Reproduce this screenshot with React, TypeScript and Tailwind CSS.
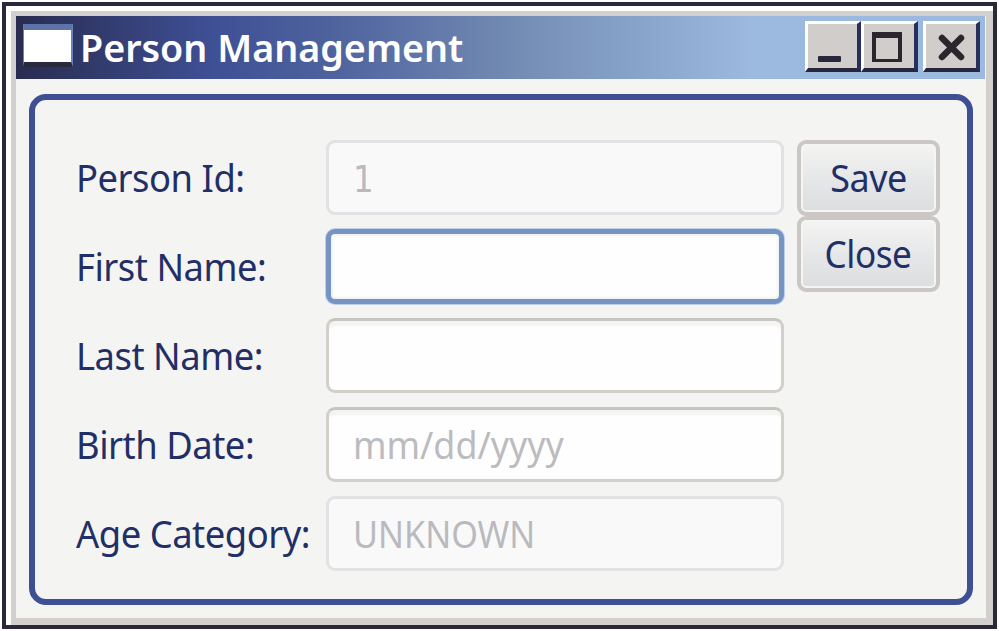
import type { ReactNode } from "react";

const fieldBase = "flex h-[75px] w-[458px] items-center rounded-[9px] ";
const fieldStyles = {
  disabled: "pl-[24px] pb-[2px] border-[3px] border-[#e0e2e4] bg-[#f9f9f9] text-[#b9babf]",
  normal: "pl-[24px] pb-[2px] border-[3px] border-[#d3cfcb] border-t-[#c8c4c0] bg-[#fefefe] text-[#bcbbbe] shadow-[inset_0_6px_2px_-1px_#f4f4f2]",
  focused: "border-[5px] border-[#7594c4] bg-[#fefefe] shadow-[0_0_0_1px_#bdd0e8,inset_0_0_2px_2px_#f1f3f5]",
};

function Row({ label, kind, children }: { label: string; kind: keyof typeof fieldStyles; children?: ReactNode }) {
  return (
    <div className="flex items-center">
      <div className="w-[250px] pb-[2px]">
        <span className="inline-block origin-left scale-x-[0.957] tracking-[-0.5px]">{label}</span>
      </div>
      <div className={fieldBase + fieldStyles[kind]}>{children}</div>
    </div>
  );
}

function FormButton({ children }: { children: ReactNode }) {
  return (
    <button className="flex h-[76px] w-[143px] items-center justify-center rounded-[9px] border-4 border-[#cbc7c4] bg-linear-to-b from-[#f4f4f3] via-[#e6e7e8] to-[#dcdddf] pb-[3px] shadow-[inset_0_0_0_2px_#f5f5f4]">
      {children}
    </button>
  );
}

function CaptionButton({ className, children }: { className: string; children: ReactNode }) {
  return (
    <div className={"h-[51px] border-t-[3px] border-r-4 border-b-4 border-l-[3px] border-t-white border-r-[#28305a] border-b-[#28283c] border-l-white bg-[#d1cdca] " + className}>
      {children}
    </div>
  );
}

export default function App() {
  return (
    <div className="h-[631px] w-[999px] bg-white pt-[2px] pl-[2px] font-['Noto_Sans',sans-serif] text-[38px] leading-none whitespace-nowrap text-[#222f66]">
      <div className="h-[627px] w-[995px] border-4 border-[#29293b] bg-white pt-[5px] pl-[5px]">
        <div className="h-[614px] w-[982px] border-t-[5px] border-r-[7px] border-b-[7px] border-l-[5px] border-[#d3cfcc] bg-[#f4f4f2]">
          <header className="flex h-[63px] w-[969px] items-start bg-[linear-gradient(to_right,#292c50,#3e4f94_20%,#4f639e_33%,#748db4_52%,#9cb9df_76%)]">
            <div className="mt-[8px] ml-[7px] h-[43px] w-[50px] border-t-[6px] border-r-2 border-b-[5px] border-l border-t-[#5d73aa] border-r-[#6684b9] border-b-[#28293d] border-l-[#6684b9] bg-white" />
            <h1 className="mt-[13px] ml-[7px] w-[718px] text-[37px] leading-[38px] font-semibold text-white">
              <span className="inline-block origin-left scale-x-[1.018]">Person Management</span>
            </h1>
            <CaptionButton className="mt-[5px] ml-[7px] w-[56px]">
              <svg className="block h-full w-full" viewBox="0 0 49 44"><rect x="10" y="32" width="23" height="6" rx="1" fill="#29283a" /></svg>
            </CaptionButton>
            <CaptionButton className="mt-[5px] w-[57px]">
              <svg className="block h-full w-full" viewBox="0 0 50 44"><path d="M8 8H38V38H8Z M12 14V35H34V14Z" fill="#29272d" fillRule="evenodd" /></svg>
            </CaptionButton>
            <CaptionButton className="mt-[5px] ml-[5px] w-[57px]">
              <svg className="block h-full w-full" viewBox="0 0 50 44"><path d="M16 14L35 33M35 14L16 33" stroke="#29272d" strokeWidth="6.5" strokeLinecap="round" /></svg>
            </CaptionButton>
          </header>
          <main className="mt-[15px] ml-[13px] flex h-[511px] w-[944px] rounded-[17px] border-[6px] border-[#3e4f94] pt-[40px] pl-[41px]">
            <div className="flex flex-col gap-[14px]">
              <Row label="Person Id:" kind="disabled">
                <span className="inline-block origin-left scale-x-[0.88] pt-[6px] font-['DejaVu_Sans',sans-serif] text-[37px]">1</span>
              </Row>
              <Row label="First Name:" kind="focused" />
              <Row label="Last Name:" kind="normal" />
              <Row label="Birth Date:" kind="normal">
                <span className="inline-block origin-left scale-x-[0.943]">mm/dd/yyyy</span>
              </Row>
              <Row label="Age Category:" kind="disabled">
                <span className="inline-block origin-left scale-x-[0.9]">UNKNOWN</span>
              </Row>
            </div>
            <div className="ml-[13px] flex flex-col">
              <FormButton><span className="inline-block scale-x-[0.945] tracking-[-0.5px]">Save</span></FormButton>
              <FormButton><span className="mr-[2px] inline-block scale-x-[0.925] tracking-[-0.5px]">Close</span></FormButton>
            </div>
          </main>
        </div>
      </div>
    </div>
  );
}
